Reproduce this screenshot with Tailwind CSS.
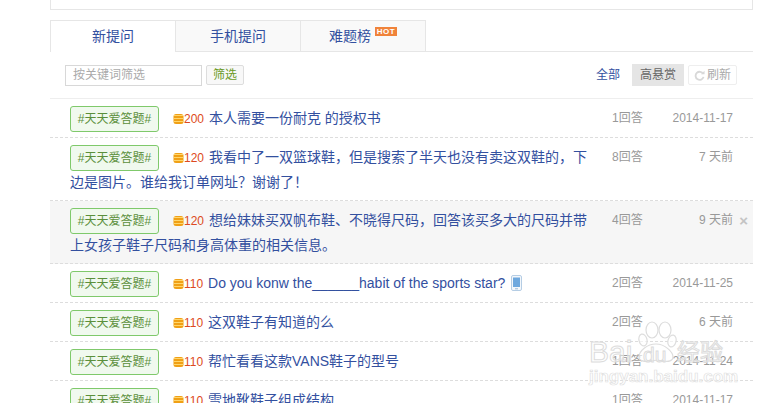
<!DOCTYPE html>
<html><head><meta charset="utf-8"><script src="https://cdn.jsdelivr.net/npm/@tailwindcss/browser@4"></script></head>
<body class="bg-white overflow-hidden h-[403px] relative font-['Liberation_Sans','Noto_Sans_CJK_SC',sans-serif] text-[14px] text-[#33509f]">
<div class="ml-[50px] w-[703px]">
  <div class="h-[10px] border border-t-0 border-[#e6e6e6]"></div>
  <div class="mt-[10px] h-[32px] flex border-b border-[#e6e6e6]">
    <div class="w-[126px] h-[32px] bg-white border border-b-0 border-[#e6e6e6] flex items-center justify-center">新提问</div>
    <div class="w-[125px] h-[31px] bg-[#f9f9f9] border-t border-r border-[#e6e6e6] flex items-center justify-center">手机提问</div>
    <div class="w-[125px] h-[31px] bg-[#f9f9f9] border-t border-r border-[#e6e6e6] flex items-center justify-center">难题榜<span class="ml-[4px] mb-[9px] w-[22px] h-[9px] bg-[#f0833a] text-white text-[8px] leading-[9px] font-bold text-center tracking-[0.5px]">HOT</span></div>
  </div>
  <div class="h-[47px] flex items-center pl-[15px] pr-[16px] border-b border-[#eeeeee] text-[12px]">
    <div class="w-[137px] h-[21px] border border-[#d8d8d8] pl-[7px] text-[#aaaaaa] leading-[19px]">按关键词筛选</div>
    <div class="ml-[4px] w-[38px] h-[20px] border border-[#dddddd] rounded-[2px] bg-[#f8f8f8] text-[#6a9a1f] text-center leading-[18px]">筛选</div>
    <div class="ml-auto">全部</div>
    <div class="ml-[12px] w-[52px] h-[22px] bg-[#e5e5e5] text-[#666666] text-center leading-[22px]">高悬赏</div>
    <div class="ml-[4px] w-[49px] h-[20px] border border-[#eeeeee] rounded-[2px] text-[#aaaaaa] flex items-center justify-center gap-[2px]">
      <svg class="w-[11px] h-[11px]" viewBox="0 0 12 12" fill="none"><path d="M10 4.2A4.4 4.4 0 1 0 10.4 7.5" stroke="#d8d8d8" stroke-width="2"/><path d="M7.6 4.6H11.5V.8z" fill="#d8d8d8"/></svg>刷新</div>
  </div>

  <div class="flex min-h-[39px] pt-[7px] pb-[5px] pl-[20px] pr-[20px] border-b border-dashed border-[#dddddd] leading-[25px]">
    <div class="w-[520px]">
      <span class="float-left mr-[14px] mb-[-1px] h-[26px] w-[89px] border border-[#7fc96b] rounded-[3px] bg-[#f0f9ee] text-[#5b8f3b] text-[12px] leading-[24px] text-center">#天天爱答题#</span>
      <svg class="inline-block w-[11px] h-[10px] align-[-1px]" viewBox="0 0 11 10"><rect x=".5" y="0" width="10" height="10" rx="2.5" fill="#f0a015"/><path d="M1 1.5h9M1 4.5h9M1 7.5h9" stroke="#ffd66b" stroke-width="1"/></svg><span class="text-[12px] leading-none mr-[1px] text-[#dd4a20]">200</span> 本人需要一份耐克 的授权书
    </div>
    <div class="w-[59px] ml-[22px] text-[12px] text-[#999999]">1回答</div>
    <div class="w-[62px] text-[12px] text-[#999999] text-right">2014-11-17</div>
  </div>

  <div class="flex min-h-[39px] pt-[7px] pb-[5px] pl-[20px] pr-[20px] border-b border-dashed border-[#dddddd] leading-[25px]">
    <div class="w-[520px]">
      <span class="float-left mr-[14px] mb-[-1px] h-[26px] w-[89px] border border-[#7fc96b] rounded-[3px] bg-[#f0f9ee] text-[#5b8f3b] text-[12px] leading-[24px] text-center">#天天爱答题#</span>
      <svg class="inline-block w-[11px] h-[10px] align-[-1px]" viewBox="0 0 11 10"><rect x=".5" y="0" width="10" height="10" rx="2.5" fill="#f0a015"/><path d="M1 1.5h9M1 4.5h9M1 7.5h9" stroke="#ffd66b" stroke-width="1"/></svg><span class="text-[12px] leading-none mr-[1px] text-[#dd4a20]">120</span> 我看中了一双篮球鞋，但是搜索了半天也没有卖这双鞋的，下边是图片。谁给我订单网址？谢谢了！
    </div>
    <div class="w-[59px] ml-[22px] text-[12px] text-[#999999]">8回答</div>
    <div class="w-[62px] text-[12px] text-[#999999] text-right">7 天前</div>
  </div>

  <div class="relative flex min-h-[39px] pt-[7px] pb-[5px] pl-[20px] pr-[20px] border-b border-dashed border-[#dddddd] leading-[25px] bg-[#f6f6f6]">
    <div class="w-[520px]">
      <span class="float-left mr-[14px] mb-[-1px] h-[26px] w-[89px] border border-[#7fc96b] rounded-[3px] bg-[#f0f9ee] text-[#5b8f3b] text-[12px] leading-[24px] text-center">#天天爱答题#</span>
      <svg class="inline-block w-[11px] h-[10px] align-[-1px]" viewBox="0 0 11 10"><rect x=".5" y="0" width="10" height="10" rx="2.5" fill="#f0a015"/><path d="M1 1.5h9M1 4.5h9M1 7.5h9" stroke="#ffd66b" stroke-width="1"/></svg><span class="text-[12px] leading-none mr-[1px] text-[#dd4a20]">120</span> 想给妹妹买双帆布鞋、不晓得尺码，回答该买多大的尺码并带上女孩子鞋子尺码和身高体重的相关信息。
    </div>
    <div class="w-[59px] ml-[22px] text-[12px] text-[#999999]">4回答</div>
    <div class="w-[62px] text-[12px] text-[#999999] text-right">9 天前</div>
    <span class="absolute right-[5px] top-[7px] text-[15px] font-bold text-[#c4c4c4]">×</span>
  </div>

  <div class="flex min-h-[39px] pt-[7px] pb-[5px] pl-[20px] pr-[20px] border-b border-dashed border-[#dddddd] leading-[25px]">
    <div class="w-[520px]">
      <span class="float-left mr-[14px] mb-[-1px] h-[26px] w-[89px] border border-[#7fc96b] rounded-[3px] bg-[#f0f9ee] text-[#5b8f3b] text-[12px] leading-[24px] text-center">#天天爱答题#</span>
      <svg class="inline-block w-[11px] h-[10px] align-[-1px]" viewBox="0 0 11 10"><rect x=".5" y="0" width="10" height="10" rx="2.5" fill="#f0a015"/><path d="M1 1.5h9M1 4.5h9M1 7.5h9" stroke="#ffd66b" stroke-width="1"/></svg><span class="text-[12px] leading-none mr-[1px] text-[#dd4a20]">110</span> Do you konw the______habit of the sports star?
      <svg class="inline-block w-[11px] h-[16px] ml-[2px] align-[-3px]" viewBox="0 0 11 16"><rect x=".5" y=".5" width="10" height="15" rx="1.5" fill="#f3f7fb" stroke="#b5cde4"/><rect x="2" y="2.5" width="7" height="9.5" fill="#6ea8de"/><path d="M4 13.8h3" stroke="#9ab8d6"/></svg>
    </div>
    <div class="w-[59px] ml-[22px] text-[12px] text-[#999999]">2回答</div>
    <div class="w-[62px] text-[12px] text-[#999999] text-right">2014-11-25</div>
  </div>

  <div class="flex min-h-[39px] pt-[7px] pb-[5px] pl-[20px] pr-[20px] border-b border-dashed border-[#dddddd] leading-[25px]">
    <div class="w-[520px]">
      <span class="float-left mr-[14px] mb-[-1px] h-[26px] w-[89px] border border-[#7fc96b] rounded-[3px] bg-[#f0f9ee] text-[#5b8f3b] text-[12px] leading-[24px] text-center">#天天爱答题#</span>
      <svg class="inline-block w-[11px] h-[10px] align-[-1px]" viewBox="0 0 11 10"><rect x=".5" y="0" width="10" height="10" rx="2.5" fill="#f0a015"/><path d="M1 1.5h9M1 4.5h9M1 7.5h9" stroke="#ffd66b" stroke-width="1"/></svg><span class="text-[12px] leading-none mr-[1px] text-[#dd4a20]">110</span> 这双鞋子有知道的么
    </div>
    <div class="w-[59px] ml-[22px] text-[12px] text-[#999999]">2回答</div>
    <div class="w-[62px] text-[12px] text-[#999999] text-right">6 天前</div>
  </div>

  <div class="flex min-h-[39px] pt-[7px] pb-[5px] pl-[20px] pr-[20px] border-b border-dashed border-[#dddddd] leading-[25px]">
    <div class="w-[520px]">
      <span class="float-left mr-[14px] mb-[-1px] h-[26px] w-[89px] border border-[#7fc96b] rounded-[3px] bg-[#f0f9ee] text-[#5b8f3b] text-[12px] leading-[24px] text-center">#天天爱答题#</span>
      <svg class="inline-block w-[11px] h-[10px] align-[-1px]" viewBox="0 0 11 10"><rect x=".5" y="0" width="10" height="10" rx="2.5" fill="#f0a015"/><path d="M1 1.5h9M1 4.5h9M1 7.5h9" stroke="#ffd66b" stroke-width="1"/></svg><span class="text-[12px] leading-none mr-[1px] text-[#dd4a20]">110</span> 帮忙看看这款VANS鞋子的型号
    </div>
    <div class="w-[59px] ml-[22px] text-[12px] text-[#999999]">1回答</div>
    <div class="w-[62px] text-[12px] text-[#999999] text-right">2014-11-24</div>
  </div>

  <div class="flex min-h-[39px] pt-[7px] pb-[5px] pl-[20px] pr-[20px] leading-[25px]">
    <div class="w-[520px]">
      <span class="float-left mr-[14px] mb-[-1px] h-[26px] w-[89px] border border-[#7fc96b] rounded-[3px] bg-[#f0f9ee] text-[#5b8f3b] text-[12px] leading-[24px] text-center">#天天爱答题#</span>
      <svg class="inline-block w-[11px] h-[10px] align-[-1px]" viewBox="0 0 11 10"><rect x=".5" y="0" width="10" height="10" rx="2.5" fill="#f0a015"/><path d="M1 1.5h9M1 4.5h9M1 7.5h9" stroke="#ffd66b" stroke-width="1"/></svg><span class="text-[12px] leading-none mr-[1px] text-[#dd4a20]">110</span> 雪地靴鞋子组成结构
    </div>
    <div class="w-[59px] ml-[22px] text-[12px] text-[#999999]">1回答</div>
    <div class="w-[62px] text-[12px] text-[#999999] text-right">2014-11-17</div>
  </div>
</div>

<!-- watermark -->
<div class="absolute left-[587px] top-[318px] w-[170px] h-[85px] pointer-events-none">
  <svg class="absolute left-[50px] top-[3px] w-[40px] h-[42px]" viewBox="0 0 40 42" fill="#ffffff" fill-opacity=".6" stroke="#dddddd" stroke-width="1.2">
    <ellipse cx="6" cy="19" rx="4" ry="6" transform="rotate(-15 6 19)"/>
    <ellipse cx="15" cy="9" rx="6" ry="8"/>
    <ellipse cx="28" cy="9" rx="6" ry="8"/>
    <ellipse cx="35" cy="20" rx="4" ry="6" transform="rotate(15 35 20)"/>
    <path d="M19 23c9 0 17 8 17 13 0 4-5 5-9 4-5-1-10-1-15 0-4 1-10 0-10-4 0-6 8-13 17-13z"/>
  </svg>
  <span class="absolute left-[2px] top-[14px] text-[30px] leading-[40px] text-white/50 [-webkit-text-stroke:1px_#dcdcdc]">Bai</span>
  <span class="absolute left-[56px] top-[26px] text-[21px] leading-[22px] text-white/50 [-webkit-text-stroke:1px_#dcdcdc]">du</span>
  <span class="absolute left-[90px] top-[20px] text-[23px] leading-[28px] text-white/50 [-webkit-text-stroke:1px_#dcdcdc]">经验</span>
  <span class="absolute left-[2px] top-[49px] text-[17px] leading-[20px] font-bold text-white/50 [-webkit-text-stroke:.7px_#dfdfdf]">jingyan.baidu.com</span>
</div>
</body></html>
